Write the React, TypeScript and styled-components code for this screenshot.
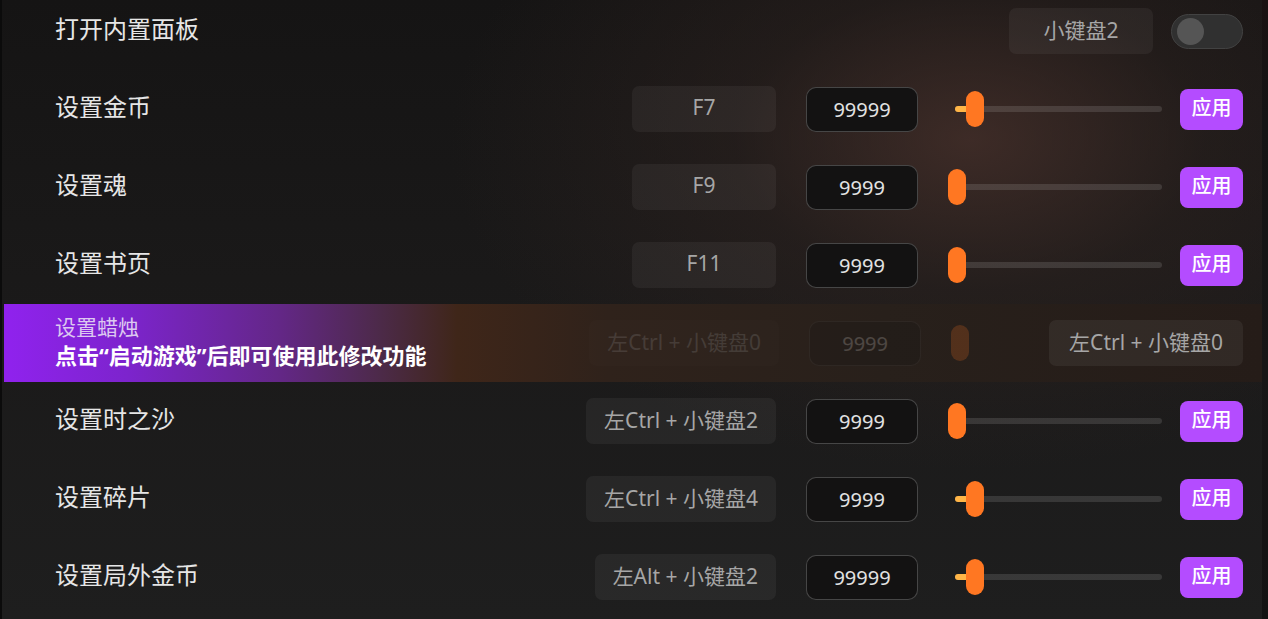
import React from "react";
import styled, { createGlobalStyle } from "styled-components";

const GlobalStyle = createGlobalStyle`
  html, body { margin: 0; padding: 0; background: #0b0b0b; overflow: hidden; }
  body { font-family: "Noto Sans", "Noto Sans CJK SC", sans-serif; }
  * { box-sizing: border-box; }
`;

const Frame = styled.div`
  display: flex;
  width: 1268px;
  height: 619px;
  background: #0b0b0b;
`;

const Panel = styled.main`
  margin-left: 2px;
  width: 1260px;
  height: 619px;
  overflow: hidden;
  background:
    radial-gradient(ellipse 520px 330px at 968px 140px, rgba(74, 50, 44, 0.75) 0%, rgba(52, 38, 34, 0.4) 45%, rgba(30, 28, 28, 0) 100%),
    linear-gradient(180deg, #151414 0%, #1a1919 45%, #1e1e1e 100%);
`;

const RightEdge = styled.div`
  flex: 1;
  background: linear-gradient(180deg, #1a1212 0%, #141414 20%, #171616 60%, #131313 100%);
`;

const List = styled.div`
  display: flex;
  flex-direction: column;
  margin-top: -8px;
`;

const Row = styled.div`
  position: relative;
  height: 78px;
  display: flex;
  align-items: center;
  padding: 0 19px 0 53px;
`;

const Label = styled.div`
  flex: 1;
  font-size: 24px;
  line-height: 32px;
  padding-bottom: 6px;
  color: #e6e6e6;
  font-family: "Noto Sans CJK SC", sans-serif;
`;

const KeyBox = styled.div`
  min-width: 144px;
  height: 46px;
  padding: 0 18px 4px;
  display: flex;
  align-items: center;
  justify-content: center;
  border-radius: 7px;
  background: rgba(255, 255, 255, 0.05);
  color: #a6a6a6;
  font-size: 21px;
  white-space: nowrap;
`;

const NumberField = styled.div`
  margin-left: 30px;
  width: 112px;
  height: 45px;
  border: 1.5px solid rgba(255, 255, 255, 0.22);
  border-radius: 10px;
  background: #131212;
  color: #e2e2e2;
  font-size: 20px;
  display: flex;
  align-items: center;
  justify-content: center;
  padding-top: 1px;
`;

const SliderBox = styled.div`
  position: relative;
  margin-left: 30px;
  width: 214px;
  height: 36px;
`;

const Track = styled.div`
  position: absolute;
  left: 7px;
  right: 0;
  top: 15px;
  height: 6px;
  border-radius: 3px;
  background: rgba(255, 255, 255, 0.12);
`;

const Fill = styled.div`
  position: absolute;
  left: 7px;
  top: 15px;
  height: 6px;
  border-radius: 3px;
  background: #ffb547;
`;

const Thumb = styled.div`
  position: absolute;
  top: 0;
  width: 18px;
  height: 36px;
  border-radius: 9px;
  background: #ff7722;
`;

const ApplyButton = styled.button`
  margin-left: 18px;
  width: 63px;
  height: 41px;
  border: none;
  border-radius: 8px;
  background: #b44cff;
  color: #ffffff;
  font-size: 20px;
  line-height: 28px;
  font-family: "Noto Sans CJK SC", sans-serif;
  font-weight: 500;
  padding: 0 0 5px;
`;

const Toggle = styled.div`
  margin-left: 18px;
  width: 72px;
  height: 35px;
  border-radius: 18px;
  background: #303030;
  border: 1px solid #424242;
  display: flex;
  align-items: center;
  padding-left: 5px;
`;

const Knob = styled.div`
  width: 27px;
  height: 27px;
  border-radius: 50%;
  background: #555555;
`;

const Banner = styled.div`
  position: absolute;
  left: 2px;
  right: 0;
  top: 0;
  bottom: 0;
  background: linear-gradient(90deg, #9022ee 0%, #7c24cc 10%, #632786 22%, #4c2a48 30%, #3f2619 36%, #2f221b 48%, #28201b 70%, #251c18 100%);
`;

const LockedText = styled.div`
  position: relative;
  flex: 1;
  display: flex;
  flex-direction: column;
  font-family: "Noto Sans", "Noto Sans CJK SC", sans-serif;
  padding-bottom: 4px;
`;

const LockedTitle = styled.div`
  font-size: 21px;
  line-height: 28px;
  color: #dcc8f0;
`;

const LockedHint = styled.div`
  font-size: 22px;
  line-height: 28px;
  font-weight: 700;
  color: #ffffff;
  white-space: nowrap;
`;

const Faded = styled.div`
  position: relative;
  display: flex;
  align-items: center;
  opacity: 0.2;
`;

const StubThumb = styled.div`
  margin-left: 30px;
  width: 18px;
  height: 36px;
  border-radius: 9px;
  background: #ff7722;
`;

const HotkeyBox = styled(KeyBox)`
  position: relative;
  margin-left: 80px;
  padding: 0 20px 4px;
  background: rgba(255, 255, 255, 0.06);
`;

type Item = { label: string; hotkey: string; value: string; pos: number };

const items: Item[] = [
  { label: "设置金币", hotkey: "F7", value: "99999", pos: 18 },
  { label: "设置魂", hotkey: "F9", value: "9999", pos: 0 },
  { label: "设置书页", hotkey: "F11", value: "9999", pos: 0 },
];

const itemsAfter: Item[] = [
  { label: "设置时之沙", hotkey: "左Ctrl + 小键盘2", value: "9999", pos: 0 },
  { label: "设置碎片", hotkey: "左Ctrl + 小键盘4", value: "9999", pos: 18 },
  { label: "设置局外金币", hotkey: "左Alt + 小键盘2", value: "99999", pos: 18 },
];

const Slider = ({ pos }: { pos: number }) => (
  <SliderBox>
    <Track />
    {pos > 0 && <Fill style={{ width: pos + 4 }} />}
    <Thumb style={{ left: pos }} />
  </SliderBox>
);

const SettingRow = ({ item }: { item: Item }) => (
  <Row>
    <Label>{item.label}</Label>
    <KeyBox>{item.hotkey}</KeyBox>
    <NumberField>{item.value}</NumberField>
    <Slider pos={item.pos} />
    <ApplyButton>应用</ApplyButton>
  </Row>
);

export default function App() {
  return (
    <>
      <GlobalStyle />
      <Frame>
        <Panel>
          <List>
            <Row>
              <Label>打开内置面板</Label>
              <KeyBox>小键盘2</KeyBox>
              <Toggle>
                <Knob />
              </Toggle>
            </Row>
            {items.map((it) => (
              <SettingRow key={it.label} item={it} />
            ))}
            <Row>
              <Banner />
              <LockedText>
                <LockedTitle>设置蜡烛</LockedTitle>
                <LockedHint>点击“启动游戏”后即可使用此修改功能</LockedHint>
              </LockedText>
              <Faded>
                <KeyBox>左Ctrl + 小键盘0</KeyBox>
                <NumberField>9999</NumberField>
                <StubThumb />
              </Faded>
              <HotkeyBox>左Ctrl + 小键盘0</HotkeyBox>
            </Row>
            {itemsAfter.map((it) => (
              <SettingRow key={it.label} item={it} />
            ))}
          </List>
        </Panel>
        <RightEdge />
      </Frame>
    </>
  );
}
